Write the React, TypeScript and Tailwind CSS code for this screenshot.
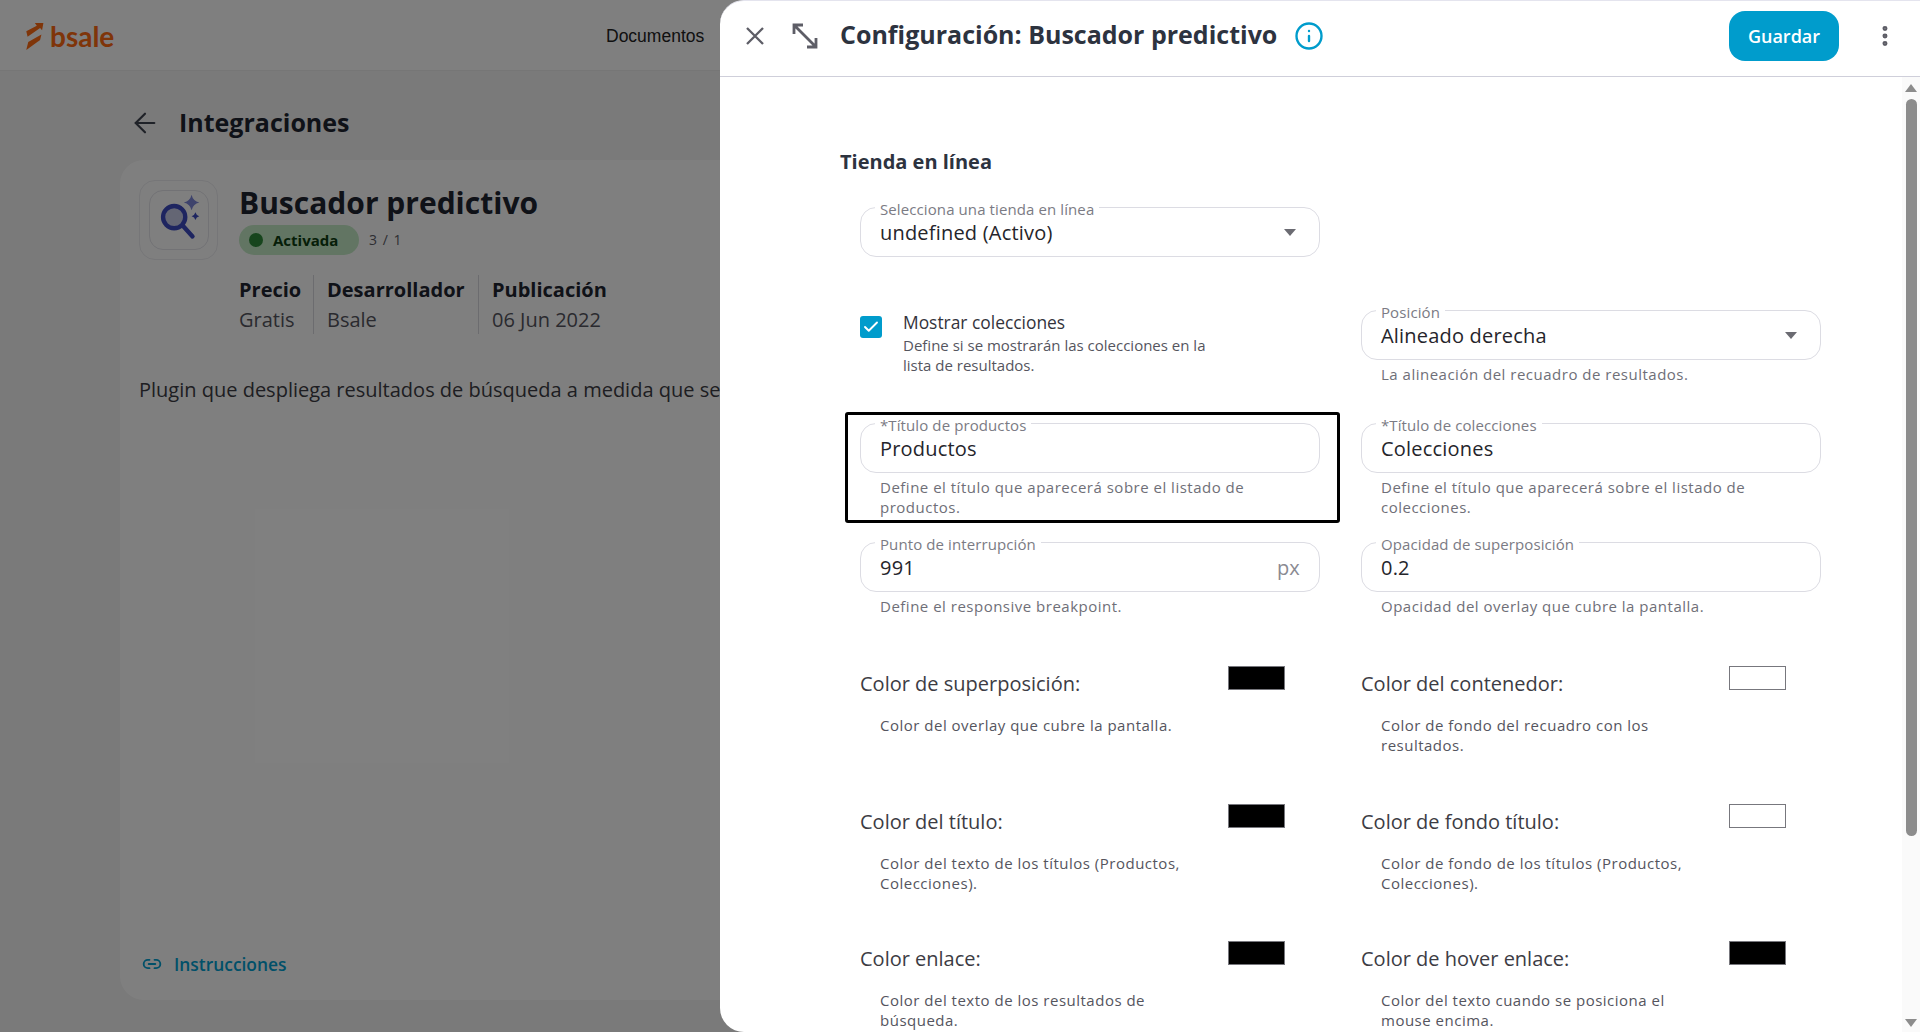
import React from 'react';
import { ArrowLeft, Info, EllipsisVertical, Link2, Check } from 'lucide-react';

const font = { fontFamily: '"Open Sans", sans-serif' };

const Caret = () => (
  <svg width="12" height="7" viewBox="0 0 12 7" className="absolute right-[23px] top-[21px]">
    <path d="M0 0h12L6 7z" fill="#6b6b72" />
  </svg>
);

const Field: React.FC<{ label: string; value: string; help?: string[]; select?: boolean; suffix?: string }> = ({
  label,
  value,
  help,
  select,
  suffix,
}) => (
  <div className="w-[460px]">
    <div className="relative h-[50px] rounded-2xl border border-[#dcdce3] pl-[19px] pt-[10px] text-xl leading-[30px] tracking-[0.2px] text-[#25252b]">
      <span className="absolute left-[14px] top-[-8px] bg-white px-[5px] text-[15px] leading-[18px] tracking-[0.1px] text-[#7b7b84]">{label}</span>
      {value}
      {select && <Caret />}
      {suffix && <span className="absolute right-[19px] top-[10px] text-[#8a8a92]">{suffix}</span>}
    </div>
    {help && (
      <div className="mt-[4px] pl-[20px] text-[15px] leading-[20px] tracking-[0.5px] text-[#6f6f78]">
        {help.map((line) => (
          <div key={line}>{line}</div>
        ))}
      </div>
    )}
  </div>
);

const ColorRow: React.FC<{ label: string; color: string; help: string[] }> = ({ label, color, help }) => (
  <div className="w-[460px]">
    <div className="flex items-start justify-between pr-[35px]">
      <span className="mt-[4px] text-xl leading-[28px] text-[#3c3c44]">{label}</span>
      <span className={`h-[24px] w-[57px] border border-[#77777d] ${color}`} />
    </div>
    <div className="mt-[17px] pl-[20px] text-[15px] leading-[20px] tracking-[0.5px] text-[#55555e]">
      {help.map((line) => (
        <div key={line}>{line}</div>
      ))}
    </div>
  </div>
);

const Background = () => (
  <div className="h-full w-full bg-[#f4f4f4]">
    <div className="flex h-[71px] items-center justify-between border-b border-[#ececec] bg-white pl-[26px] pt-[2px]">
      <div className="flex items-center gap-[6px]">
        <svg width="18" height="27" viewBox="36 20 53 82">
          <path d="M36 45L68 28 62 20H88L84 42 78 35 40 62Z" fill="#ff6a13" />
          <path d="M82 55L78 72 36 102 42 78Z" fill="#ff6a13" />
        </svg>
        <span className="text-[28px] font-bold leading-none text-[#ff6a13]" style={{ fontFamily: 'Lato, sans-serif' }}>
          bsale
        </span>
      </div>
      <span
        className="absolute left-[606px] top-[25px] text-[17.5px] leading-[22px] text-[#222]"
        style={{ fontFamily: '"Liberation Sans", sans-serif' }}
      >
        Documentos
      </span>
    </div>
    <div className="pl-[120px]">
      <div className="flex h-[89px] items-center pl-[9px] pt-[14px] text-[#1f2530]">
        <ArrowLeft size={32} strokeWidth={1.6} className="text-[#3f4450]" />
        <span className="ml-[18px] text-[25px] font-bold">Integraciones</span>
      </div>
      <div className="flex h-[840px] flex-col rounded-l-[24px] bg-white pl-[19px] pr-[40px] pt-[20px]">
        <div className="flex">
          <div className="flex h-[80px] w-[79px] items-center justify-center rounded-2xl border border-[#ececf0]">
            <div className="flex h-[60px] w-[60px] items-center justify-center rounded-[14px] border border-[#e4e4ea]">
              <svg width="60" height="60" viewBox="0 0 60 60" fill="none">
                <circle cx="25" cy="27" r="11.5" fill="#c9cde8" stroke="#3d4bc0" strokeWidth="4.5" />
                <path d="M34 36l10 11" stroke="#3d4bc0" strokeWidth="4.5" strokeLinecap="round" />
                <path d="M43 4q1.500 6.500 8 8-6.500 1.500-8 8-1.500-6.500-8-8 6.500-1.500 8-8z" fill="#7d86d8" />
                <path d="M47 22q.8 3.200 4 4-3.200.8-4 4-.8-3.200-4-4 3.200-.8 4-4z" fill="#3d4bc0" />
              </svg>
            </div>
          </div>
          <div className="ml-[21px]">
            <div className="mt-[3px] text-[30px] font-bold leading-[40px] text-[#1f2530]">Buscador predictivo</div>
            <div className="mt-[2px] flex items-center">
              <span className="flex h-[30px] w-[120px] items-center rounded-full bg-[#c4ebc6] pl-[10px] text-[15px] font-bold text-[#0c3d10]">
                <span className="mr-[10px] h-[14px] w-[14px] rounded-full bg-[#2e8b3a]" />
                Activada
              </span>
              <span className="ml-[10px] text-sm tracking-[1px] text-[#5c5c66]">3 / 1</span>
            </div>
            <div className="mt-[20px] flex h-[59px] text-[20px] leading-[30px]">
              <div className="w-[75px] border-r border-[#d8d8de]">
                <div className="font-bold text-[#1f2530]">Precio</div>
                <div className="text-[#55555e]">Gratis</div>
              </div>
              <div className="w-[165px] border-r border-[#d8d8de] pl-[13px]">
                <div className="font-bold text-[#1f2530]">Desarrollador</div>
                <div className="text-[#55555e]">Bsale</div>
              </div>
              <div className="pl-[13px]">
                <div className="font-bold text-[#1f2530]">Publicación</div>
                <div className="text-[#55555e]">06 Jun 2022</div>
              </div>
            </div>
          </div>
        </div>
        <p className="mt-[41px] whitespace-nowrap text-[20px] leading-[30px] text-[#3c3c44]">
          Plugin que despliega resultados de búsqueda a medida que se escribe en el buscador.
        </p>
        <div className="mt-auto mb-[22px] flex items-center pl-[3px] text-[#00a0d2]">
          <Link2 size={20} strokeWidth={2.2} />
          <span className="ml-[12px] text-[17.4px] font-semibold leading-[28px]">Instrucciones</span>
        </div>
      </div>
    </div>
  </div>
);

const App: React.FC = () => {
  return (
    <div className="relative h-[1032px] w-full overflow-hidden" style={font}>
      <Background />
      <div className="absolute inset-0 bg-black/50" />
      <div className="absolute inset-y-0 right-0 flex w-[1200px] flex-col overflow-hidden rounded-l-[24px] border-t border-[#e4e4ee] bg-white">
        <header className="flex h-[76px] shrink-0 items-center border-b border-[#cfcfda] pb-[6px] pl-[26px] pr-[22px]">
          <svg width="18" height="18" viewBox="0 0 18 18" fill="none" stroke="#5d5d66" strokeWidth="2.300">
            <path d="M1 1l16 16M17 1L1 17" />
          </svg>
          <svg width="26" height="26" viewBox="0 0 26 26" fill="none" stroke="#5d5d66" strokeWidth="2.800" className="ml-[28px]">
            <path d="M2 11V2h9M2 2l22 22M24 15v9h-9" />
          </svg>
          <span className="ml-[22px] mt-[-4px] text-[25px] font-bold leading-[32px] text-[#2d333f]">Configuración: Buscador predictivo</span>
          <Info size={30} strokeWidth={1.9} className="ml-[17px] text-[#009ccc]" />
          <button className="ml-auto h-[50px] w-[110px] rounded-2xl bg-[#009ccc] text-lg font-semibold text-white">Guardar</button>
          <EllipsisVertical size={26} strokeWidth={2.600} className="ml-[33px] text-[#5d5d66]" />
        </header>
        <div className="relative flex-1 overflow-hidden pl-[120px] pt-[71px]">
          <h2 className="text-xl font-bold leading-[28px] text-[#2d333f]">Tienda en línea</h2>
          <div className="ml-[20px] mt-[31px]">
            <Field label="Selecciona una tienda en línea" value="undefined (Activo)" select />
            <div className="mt-[53px] grid grid-cols-[460px_460px] grid-rows-[113px_119px_124px_138px_137px_auto] gap-x-[41px]">
              <div className="flex pt-[5px]">
                <span className="mt-[1px] flex h-[22px] w-[22px] items-center justify-center rounded-[3px] bg-[#009ccc]">
                  <Check size={18} strokeWidth={2.500} className="text-white" />
                </span>
                <div className="ml-[21px] w-[320px]">
                  <div className="mt-[-1px] text-[17.4px] leading-[16px] text-[#33333b]">Mostrar colecciones</div>
                  <div className="mt-[5px] text-[15px] leading-[20px] text-[#55555e]">
                    Define si se mostrarán las colecciones en la lista de resultados.
                  </div>
                </div>
              </div>
              <Field label="Posición" value="Alineado derecha" select help={['La alineación del recuadro de resultados.']} />
              <div className="relative">
                <Field
                  label="*Título de productos"
                  value="Productos"
                  help={['Define el título que aparecerá sobre el listado de', 'productos.']}
                />
                <div className="absolute left-[-15px] top-[-11px] h-[111px] w-[495px] rounded-[3px] border-[3px] border-black" />
              </div>
              <Field
                label="*Título de colecciones"
                value="Colecciones"
                help={['Define el título que aparecerá sobre el listado de', 'colecciones.']}
              />
              <Field label="Punto de interrupción" value="991" suffix="px" help={['Define el responsive breakpoint.']} />
              <Field label="Opacidad de superposición" value="0.2" help={['Opacidad del overlay que cubre la pantalla.']} />
              <ColorRow label="Color de superposición:" color="bg-black" help={['Color del overlay que cubre la pantalla.']} />
              <ColorRow label="Color del contenedor:" color="bg-white" help={['Color de fondo del recuadro con los', 'resultados.']} />
              <ColorRow label="Color del título:" color="bg-black" help={['Color del texto de los títulos (Productos,', 'Colecciones).']} />
              <ColorRow label="Color de fondo título:" color="bg-white" help={['Color de fondo de los títulos (Productos,', 'Colecciones).']} />
              <ColorRow label="Color enlace:" color="bg-black" help={['Color del texto de los resultados de', 'búsqueda.']} />
              <ColorRow label="Color de hover enlace:" color="bg-black" help={['Color del texto cuando se posiciona el', 'mouse encima.']} />
            </div>
          </div>
          <div className="absolute inset-y-0 right-0 flex w-[18px] flex-col items-center bg-[#fafafa]">
            <svg width="12" height="8" viewBox="0 0 12 8" className="mt-[7px]">
              <path d="M6 0l6 8H0z" fill="#8c8c8c" />
            </svg>
            <div className="mt-[7px] h-[737px] w-[11px] rounded-full bg-[#8c8c8c]" />
            <svg width="12" height="8" viewBox="0 0 12 8" className="mt-auto mb-[5px]">
              <path d="M0 0h12L6 8z" fill="#8c8c8c" />
            </svg>
          </div>
        </div>
      </div>
    </div>
  );
};

export default App;
